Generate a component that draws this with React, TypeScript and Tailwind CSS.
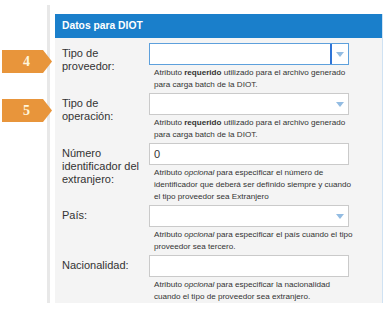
import React from "react";

type Row = {
  label: string[];
  value?: string;
  select?: boolean;
  focused?: boolean;
  kind: "requerido" | "opcional";
  help: string[];
};

const rows: Row[] = [
  {
    label: ["Tipo de", "proveedor:"],
    select: true,
    focused: true,
    kind: "requerido",
    help: [" utilizado para el archivo generado", "para carga batch de la DIOT."],
  },
  {
    label: ["Tipo de", "operación:"],
    select: true,
    kind: "requerido",
    help: [" utilizado para el archivo generado", "para carga batch de la DIOT."],
  },
  {
    label: ["Número", "identificador del", "extranjero:"],
    value: "0",
    kind: "opcional",
    help: [
      " para especificar el número de",
      "identificador que deberá ser definido siempre y cuando",
      "el tipo proveedor sea Extranjero",
    ],
  },
  {
    label: ["País:"],
    select: true,
    kind: "opcional",
    help: [" para especificar el país cuando el tipo", "proveedor sea tercero."],
  },
  {
    label: ["Nacionalidad:"],
    kind: "opcional",
    help: [" para especificar la nacionalidad", "cuando el tipo de proveedor sea extranjero."],
  },
];

function Arrow() {
  return (
    <svg width="8" height="5" viewBox="0 0 8 5" className="shrink-0">
      <polygon points="0,0 8,0 4,5" fill="#93bce2" />
    </svg>
  );
}

function Badge({ n, top }: { n: string; top: string }) {
  return (
    <div
      className={`absolute left-[2px] ${top} w-[50px] h-[23px] bg-[#e8953b] [clip-path:polygon(0_0,82%_0,100%_50%,82%_100%,0_100%)] flex items-center justify-center pr-[1px]`}
    >
      <span className="font-['Liberation_Serif',serif] font-bold text-[14px] text-[#fff6dc] leading-none">
        {n}
      </span>
    </div>
  );
}

export default function App() {
  return (
    <div className="relative w-[389px] h-[311px] bg-white font-['Liberation_Sans',Arial,sans-serif] text-[#333]">
      <div className="flex pt-[5px] pl-[47px]">
        <div className="w-[3px] h-[298px] bg-[#e8e8e8]" />
        <div className="ml-[5px] mt-[9px] w-[328px] h-[289px] bg-[#f4f4f4] border-r border-[#cfe2f3]">
          {/* Header */}
          <div className="h-[24px] bg-[#1a7fcb] flex items-center px-[7px]">
            <span className="text-white font-bold text-[10.3px]">Datos para DIOT</span>
          </div>

          <div className="pt-[5px] pl-[7px]">
            {rows.map((row, i) => (
              <div key={i} className="flex">
                <div className="w-[87px] pt-[4px] text-[11px] leading-[13px]">
                  {row.label.map((l, j) => (
                    <div key={j}>{l}</div>
                  ))}
                </div>
                <div className="w-[200px]">
                  <div
                    className={`h-[22px] bg-white border flex items-center ${
                      row.focused ? "border-[#5da0dc]" : "border-[#cacaca]"
                    }`}
                  >
                    <span className="flex-1 pl-[4px] text-[11px]">{row.value}</span>
                    {row.select && row.focused && (
                      <div className="w-[2px] h-full bg-[#2f74d6] mr-[4px]" />
                    )}
                    {row.select && (
                      <div className="pr-[4px] flex items-center">
                        <Arrow />
                      </div>
                    )}
                  </div>
                  <div className="pl-[5px] py-[2px] text-[8.1px] leading-[12px] whitespace-nowrap">
                    <div>
                      Atributo{" "}
                      {row.kind === "requerido" ? (
                        <b>requerido</b>
                      ) : (
                        <i>opcional</i>
                      )}
                      {row.help[0]}
                    </div>
                    {row.help.slice(1).map((h, j) => (
                      <div key={j}>{h}</div>
                    ))}
                  </div>
                </div>
              </div>
            ))}
          </div>
        </div>
      </div>

      <Badge n="4" top="top-[50px]" />
      <Badge n="5" top="top-[99px]" />
    </div>
  );
}
